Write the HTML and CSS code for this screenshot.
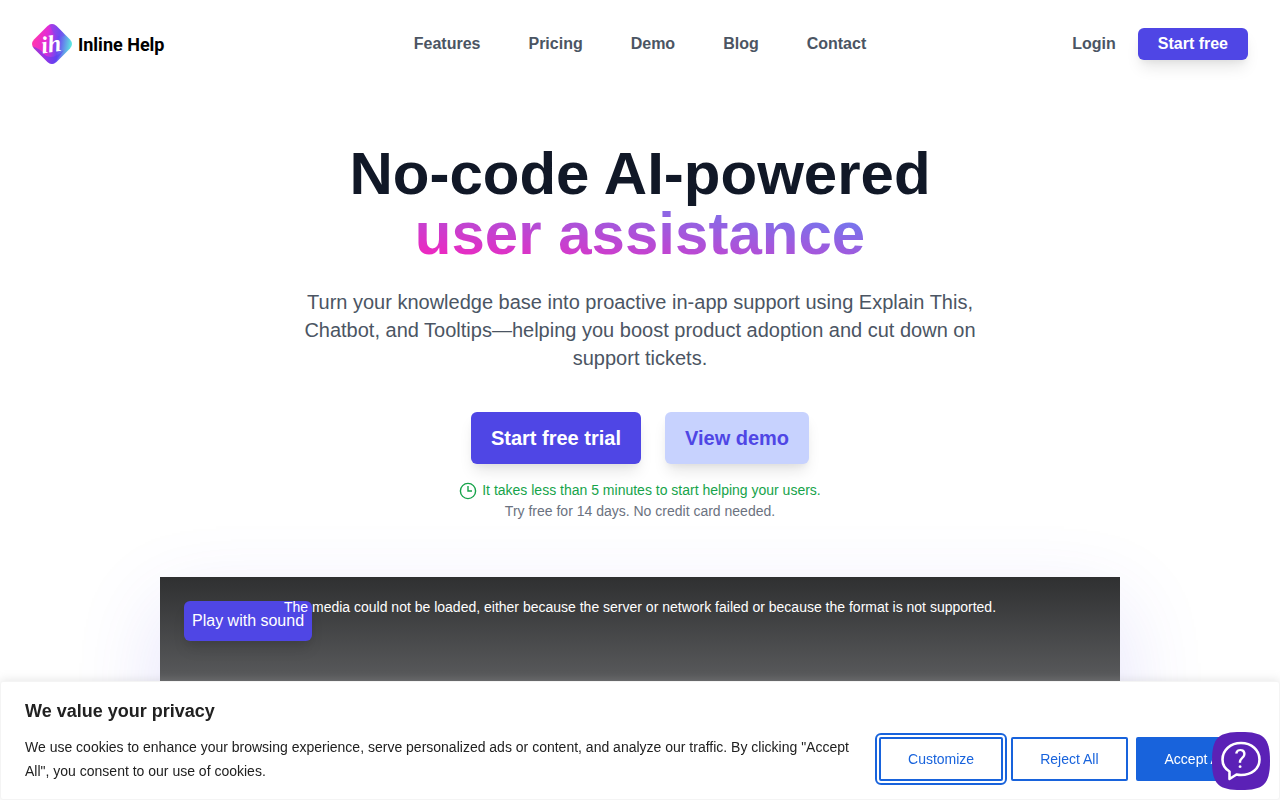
FILE: index.html
```html
<!DOCTYPE html>
<html lang="en">
<head>
  <meta charset="UTF-8">
  <meta name="viewport" content="width=device-width, initial-scale=1.0">
  <title>Inline Help</title>
  <link rel="stylesheet" href="styles.css">
</head>
<body>
  <header class="header">
    <div class="header-side">
      <a href="#" class="logo">
        <svg width="40" height="40" viewBox="0 0 40 40" aria-hidden="true">
          <defs>
            <linearGradient id="mark" gradientUnits="userSpaceOnUse" x1="2" y1="17" x2="39" y2="22">
              <stop offset="0" stop-color="#ff35b0"/>
              <stop offset="0.35" stop-color="#e02cd8"/>
              <stop offset="0.65" stop-color="#6a48f2"/>
              <stop offset="1" stop-color="#5ce6e0"/>
            </linearGradient>
            <clipPath id="diamond">
              <path d="M15.500 2Q20-2 24.500 2L38 15.500Q42 20 38 24.500L24.500 38Q20 42 15.500 38L2 24.500Q-2 20 2 15.500Z"/>
            </clipPath>
          </defs>
          <g clip-path="url(#diamond)">
            <path d="M0 0h40v40H0z" fill="url(#mark)"/>
            <path d="M0 22Q9 25 13 31Q20 37 32 26L20 42H0Z" fill="#5a3cf0" opacity="0.55"/>
            <path d="M17 0H26L33 12Q23 14 20 6Z" fill="#7a4cf0" opacity="0.5"/>
          </g>
          <text x="19" y="28" text-anchor="middle" class="logo-mark" transform="rotate(-8 20 20)">ih</text>
        </svg>
        <span>Inline Help</span>
      </a>
    </div>
    <nav class="nav">
      <a href="#">Features</a>
      <a href="#">Pricing</a>
      <a href="#">Demo</a>
      <a href="#">Blog</a>
      <a href="#">Contact</a>
    </nav>
    <div class="header-side header-right">
      <a href="#" class="login">Login</a>
      <a href="#" class="btn btn-small">Start free</a>
    </div>
  </header>

  <main class="hero">
    <h1>No-code AI-powered<br><span class="gradient">user assistance</span></h1>
    <p class="lead">Turn your knowledge base into proactive in-app support using Explain This, Chatbot, and Tooltips—helping you boost product adoption and cut down on support tickets.</p>
    <div class="actions">
      <a href="#" class="btn">Start free trial</a>
      <a href="#" class="btn btn-light">View demo</a>
    </div>
    <p class="note note-green">
      <svg width="18" height="18" viewBox="0 0 18 18" fill="none" stroke="currentColor" stroke-width="1.400" aria-hidden="true">
        <circle cx="9" cy="9" r="7.600"/>
        <path d="M9 4v5h4"/>
      </svg>
      It takes less than 5 minutes to start helping your users.
    </p>
    <p class="note">Try free for 14 days. No credit card needed.</p>

    <div class="video">
      <button type="button" class="play">Play with sound</button>
      <p class="video-error">The media could not be loaded, either because the server or network failed or because the format is not supported.</p>
    </div>
  </main>

  <section class="cookies">
    <h2>We value your privacy</h2>
    <div class="cookies-row">
      <p>We use cookies to enhance your browsing experience, serve personalized ads or content, and analyze our traffic. By clicking "Accept All", you consent to our use of cookies.</p>
      <div class="cookies-buttons">
        <button type="button" class="focused">Customize</button>
        <button type="button">Reject All</button>
        <button type="button" class="accept">Accept All</button>
      </div>
    </div>
  </section>

  <button type="button" class="help" aria-label="Help">
    <svg width="58" height="58" viewBox="0 0 58 58" aria-hidden="true">
      <path d="M29 0C51 0 58 5 58 29S51 58 29 58 0 53 0 29 7 0 29 0Z" fill="#5b21b6"/>
      <path d="M17.500 47V39.500C12.500 36.500 10.500 32 10.500 27.500 10.500 18 18.500 11 29 11S47.500 18 47.500 27.500 39.500 43 29 43C27.500 43 26 42.800 24.500 42.500Z" fill="none" stroke="#fff" stroke-width="2.600" stroke-linejoin="round"/>
      <text x="28.500" y="36" text-anchor="middle" class="help-mark">?</text>
    </svg>
  </button>
</body>
</html>
```
FILE: styles.css
```css
* {
  box-sizing: border-box;
}
body {
  margin: 0;
  font-family: "Liberation Sans", Arial, sans-serif;
  background: #fff;
  color: #4b5563;
}
h1, h2, p {
  margin: 0;
}
a {
  text-decoration: none;
  color: inherit;
}
button {
  font-family: inherit;
  cursor: pointer;
}

/* header */
.header {
  display: flex;
  align-items: center;
  padding: 24px 32px;
  font-size: 16px;
  font-weight: bold;
}
.header-side {
  flex: 1;
  display: flex;
  align-items: center;
}
.header-right {
  justify-content: flex-end;
  gap: 22px;
}
.logo {
  display: flex;
  align-items: center;
  gap: 6px;
  font-family: Roboto, sans-serif;
  font-size: 18px;
  color: #000;
}
.logo-mark {
  font-family: "Liberation Serif", serif;
  font-size: 24px;
  font-style: italic;
  font-weight: bold;
  fill: #fff;
}
.nav {
  display: flex;
  gap: 48px;
}

.btn {
  padding: 12px 20px;
  border-radius: 6px;
  background: #4f46e5;
  color: #fff;
  font-size: 20px;
  font-weight: bold;
  line-height: 28px;
  box-shadow: 0 10px 15px -3px rgba(0, 0, 0, 0.1), 0 4px 6px -2px rgba(0, 0, 0, 0.05);
}
.btn-small {
  padding: 4px 20px;
  font-size: 16px;
  line-height: 24px;
}
.btn-light {
  background: #c7d2fe;
  color: #4f46e5;
}

/* hero */
.hero {
  display: flex;
  flex-direction: column;
  align-items: center;
  padding: 56px 32px;
  text-align: center;
}
h1 {
  font-size: 60px;
  line-height: 60px;
  color: #111827;
}
.gradient {
  background: linear-gradient(to top right, #ff1cba, #6680f3 92%);
  -webkit-background-clip: text;
  background-clip: text;
  color: transparent;
}
.lead {
  max-width: 672px;
  margin: 24px 0 40px;
  font-size: 20px;
  line-height: 28px;
}
.actions {
  display: flex;
  gap: 24px;
  margin-bottom: 16px;
}
.note {
  display: flex;
  align-items: center;
  gap: 5px;
  font-size: 14px;
  line-height: 21px;
  color: #6b7280;
}
.note-green {
  color: #16a34a;
}
.video {
  position: relative;
  width: 100%;
  max-width: 960px;
  aspect-ratio: 16 / 9;
  margin-top: 55px;
  padding: 20px 24px;
  background: linear-gradient(#2f3031, #606163 120px, #77787a);
  box-shadow: 0 30px 80px rgba(79, 70, 229, 0.15);
}
.play {
  position: absolute;
  top: 24px;
  left: 24px;
  padding: 8px;
  border: 0;
  border-radius: 6px;
  background: #4f46e5;
  color: #fff;
  font-size: 16px;
  line-height: 24px;
  box-shadow: 0 10px 15px -3px rgba(0, 0, 0, 0.1), 0 4px 6px -2px rgba(0, 0, 0, 0.05);
}
.video-error {
  position: relative;
  color: #fff;
  font-size: 14px;
  line-height: 21px;
}

/* cookie bar */
.cookies {
  position: fixed;
  left: 0;
  right: 0;
  bottom: 0;
  padding: 16px 24px;
  border: 1px solid #f4f4f4;
  border-radius: 3px;
  background: #fff;
  color: #212121;
  box-shadow: 0 -1px 10px rgba(172, 171, 171, 0.3);
}
.cookies h2 {
  margin-bottom: 11px;
  font-size: 18px;
  line-height: 26px;
}
.cookies-row {
  display: flex;
  align-items: center;
  gap: 24px;
}
.cookies-row p {
  flex: 1;
  font-size: 14px;
  line-height: 24px;
}
.cookies-buttons {
  display: flex;
  gap: 8px;
}
.cookies-buttons button {
  padding: 8px 27px;
  border: 2px solid #1863dc;
  border-radius: 2px;
  background: #fff;
  color: #1863dc;
  font-size: 14px;
  line-height: 24px;
  white-space: nowrap;
}
.cookies-buttons .focused {
  outline: 2px solid #1863dc;
  outline-offset: 2px;
}
.cookies-buttons .accept {
  background: #1863dc;
  color: #fff;
}

/* help widget */
.help {
  position: fixed;
  right: 10px;
  bottom: 10px;
  padding: 0;
  border: 0;
  background: none;
}
.help svg {
  display: block;
}
.help-mark {
  font-family: Roboto, sans-serif;
  font-size: 26px;
  fill: #fff;
}
```
